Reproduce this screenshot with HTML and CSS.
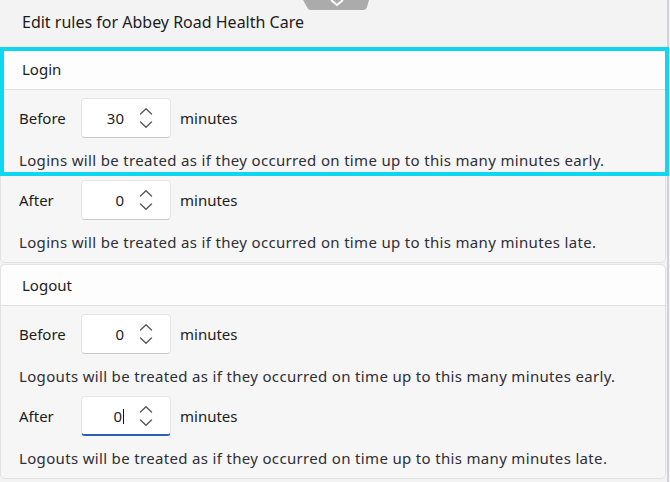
FILE: index.html
```html
<!DOCTYPE html>
<html>
<head>
<meta charset="utf-8">
<link rel="stylesheet" href="styles.css">
</head>
<body>
<div class="page">
  <div class="grab">
    <svg width="70" height="12" viewBox="0 0 70 12">
      <path d="M0 0 H66 L64 7 Q63 10 60 10 H8 Q5 10 4 7 Z" fill="#ababab"/>
      <path d="M28 0 L34 5 L40 0" fill="none" stroke="#ffffff" stroke-width="2"/>
    </svg>
  </div>
  <div class="edge"></div>
  <div class="title">Edit rules for Abbey Road Health Care</div>

  <section class="card">
    <div class="card-head">Login</div>
    <div class="card-body">
      <div class="row">
        <span class="label">Before</span>
        <div class="spin"><span class="val">30</span><span class="arrows"><svg width="14" height="22" viewBox="0 0 14 22"><path d="M1.5 7 L7 1.8 L12.5 7" /><path d="M1.5 15 L7 20.2 L12.5 15" /></svg></span></div>
        <span class="unit">minutes</span>
      </div>
      <p class="help">Logins will be treated as if they occurred on time up to this many minutes early.</p>
      <div class="row">
        <span class="label">After</span>
        <div class="spin"><span class="val">0</span><span class="arrows"><svg width="14" height="22" viewBox="0 0 14 22"><path d="M1.5 7 L7 1.8 L12.5 7" /><path d="M1.5 15 L7 20.2 L12.5 15" /></svg></span></div>
        <span class="unit">minutes</span>
      </div>
      <p class="help">Logins will be treated as if they occurred on time up to this many minutes late.</p>
    </div>
    <div class="highlight"></div>
  </section>

  <section class="card second">
    <div class="card-head">Logout</div>
    <div class="card-body">
      <div class="row">
        <span class="label">Before</span>
        <div class="spin"><span class="val">0</span><span class="arrows"><svg width="14" height="22" viewBox="0 0 14 22"><path d="M1.5 7 L7 1.8 L12.5 7" /><path d="M1.5 15 L7 20.2 L12.5 15" /></svg></span></div>
        <span class="unit">minutes</span>
      </div>
      <p class="help">Logouts will be treated as if they occurred on time up to this many minutes early.</p>
      <div class="row">
        <span class="label">After</span>
        <div class="spin focused"><span class="val">0<span class="caret"></span></span><span class="arrows"><svg width="14" height="22" viewBox="0 0 14 22"><path d="M1.5 7 L7 1.8 L12.5 7" /><path d="M1.5 15 L7 20.2 L12.5 15" /></svg></span></div>
        <span class="unit">minutes</span>
      </div>
      <p class="help">Logouts will be treated as if they occurred on time up to this many minutes late.</p>
    </div>
  </section>
</div>
</body>
</html>
```

FILE: styles.css
```css
* { box-sizing: border-box; }
html, body {
  margin: 0;
  padding: 0;
  background: #f3f3f3;
}
body {
  font-family: "Noto Sans", "Open Sans", sans-serif;
  font-size: 15px;
  color: #1c1c1c;
  width: 670px;
  height: 482px;
  overflow: hidden;
}
.page {
  position: relative;
  width: 670px;
  height: 482px;
}
.grab {
  position: absolute;
  left: 303px;
  top: 0;
  line-height: 0;
}
.edge {
  position: absolute;
  left: 667px;
  top: 0;
  width: 2px;
  height: 482px;
  background: #cfd2d8;
}
.title {
  height: 48px;
  padding: 11px 0 0 22px;
  font-size: 16px;
  line-height: 22px;
}
.card {
  position: relative;
  width: 666px;
  border: 1px solid #e2e2e2;
  border-radius: 5px;
  background: #f6f6f6;
}
.card.second {
  margin-top: 1px;
}
.card-head {
  height: 41px;
  background: #fdfdfd;
  border-bottom: 1px solid #e0e0e0;
  border-radius: 5px 5px 0 0;
  padding: 9px 0 0 21px;
  line-height: 22px;
  font-size: 15px;
}
.card-body {
  padding: 8px 0 10px 18px;
}
.row {
  display: flex;
  align-items: center;
  height: 40px;
}
.label {
  width: 62px;
}
.spin {
  position: relative;
  display: flex;
  align-items: center;
  width: 90px;
  height: 40px;
  background: #ffffff;
  border: 1px solid #e6e6e6;
  border-bottom-color: #c9c9c9;
  border-radius: 4px;
}
.spin.focused {
  border-bottom: 2px solid #2a5fb3;
}
.val {
  width: 42px;
  text-align: right;
  position: relative;
}
.caret {
  display: inline-block;
  width: 1px;
  height: 15px;
  background: #111;
  vertical-align: -2px;
  margin-left: 1px;
}
.arrows {
  margin-left: 15px;
  line-height: 0;
}
.arrows svg path {
  fill: none;
  stroke: #5a5a5a;
  stroke-width: 1.4;
  stroke-linecap: round;
  stroke-linejoin: round;
}
.unit {
  margin-left: 9px;
}
.help {
  margin: 12px 0 10px 0;
  line-height: 20px;
  font-size: 15px;
  letter-spacing: 0.33px;
  color: #2e2e36;
}
.help:last-child {
  margin-bottom: 0;
}
.highlight {
  position: absolute;
  left: -1px;
  top: -2px;
  width: 669px;
  height: 129px;
  border: 4.5px solid #0fd7f2;
  pointer-events: none;
}
```
